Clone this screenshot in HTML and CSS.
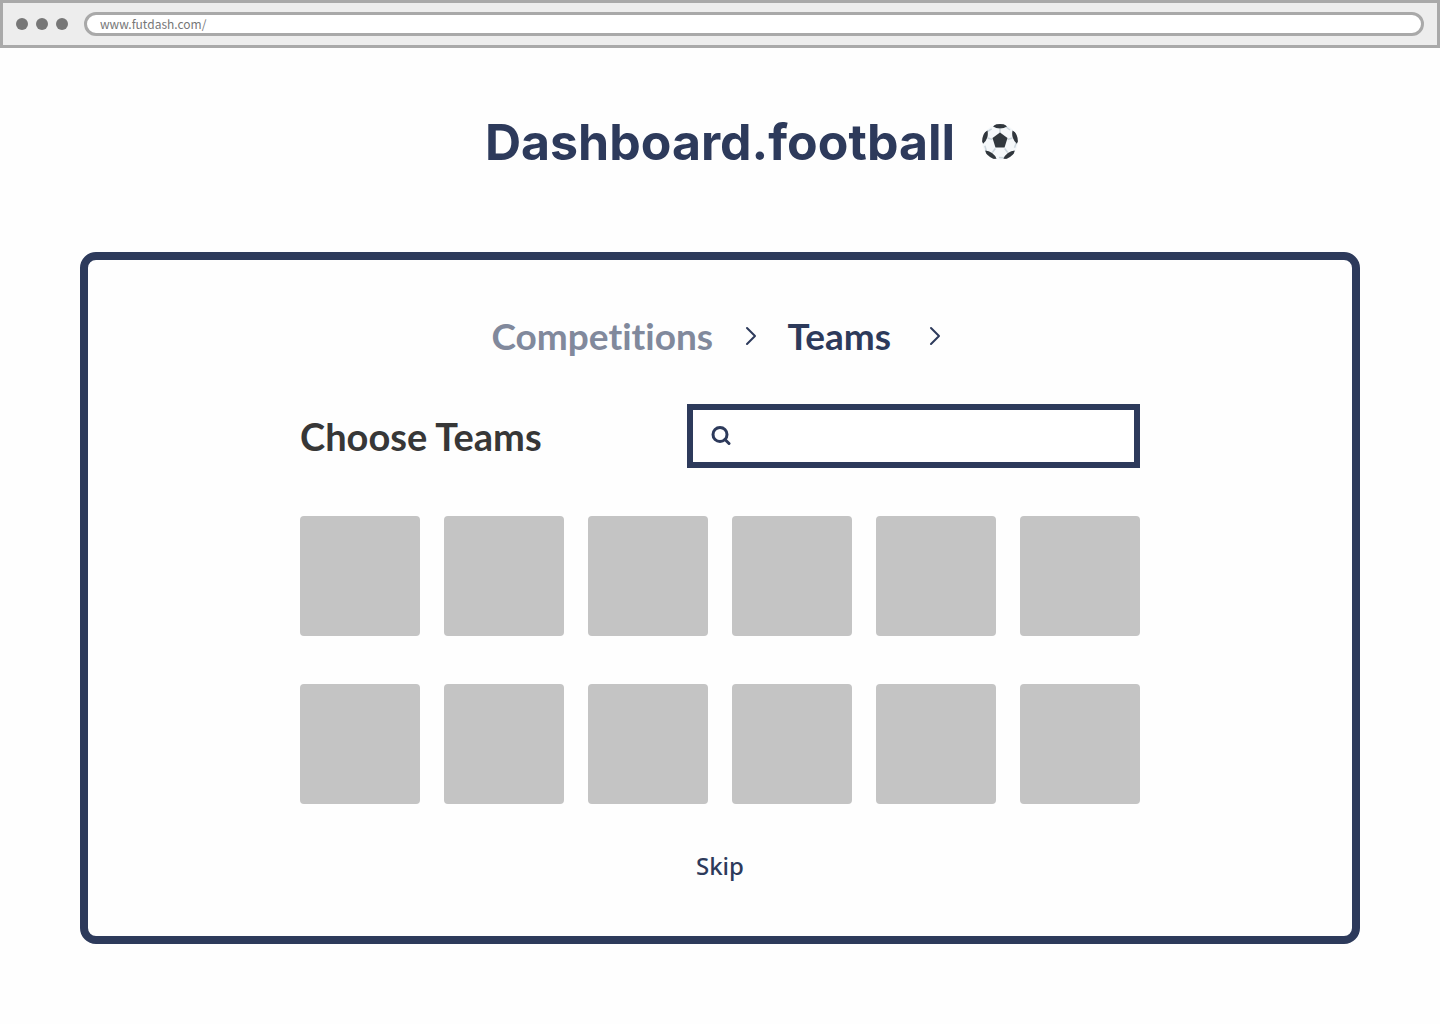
FILE: index.html
```html
<!DOCTYPE html>
<html lang="en">
<head>
<meta charset="utf-8">
<meta name="viewport" content="width=device-width, initial-scale=1">
<title>Dashboard.football</title>
<link rel="stylesheet" href="styles.css">
</head>
<body>
<div class="browser-bar">
  <div class="dots"><span class="dot"></span><span class="dot"></span><span class="dot"></span></div>
  <input class="address" type="text" aria-label="Address" value="www.futdash.com/">
</div>
<header class="site-header">
  <h1 class="site-title">Dashboard.football</h1>
  <svg class="ball" viewBox="0 0 36 36" aria-hidden="true">
    <defs>
      <clipPath id="ball-edge"><circle cx="18" cy="18" r="18"/></clipPath>
      <g id="ball-patch">
        <path d="M18 10V5M23.500 2.500L28 6" fill="none" stroke="#ccd6dd" stroke-width="1.500"/>
        <path d="M11 2.500L14 0V-2h8v2l3 2.500Q22 4.500 18 4.500T11 2.500z" fill="#31373d"/>
      </g>
    </defs>
    <g clip-path="url(#ball-edge)">
      <circle cx="18" cy="18" r="18" fill="#f5f8fa"/>
      <use href="#ball-patch"/>
      <use href="#ball-patch" transform="rotate(72 18 18)"/>
      <use href="#ball-patch" transform="rotate(144 18 18)"/>
      <use href="#ball-patch" transform="rotate(216 18 18)"/>
      <use href="#ball-patch" transform="rotate(288 18 18)"/>
      <path d="M18 8.500l7.500 5.500-3 9.500h-9l-3-9.500z" fill="#31373d"/>
    </g>
  </svg>
</header>
<main class="panel">
  <nav class="steps" aria-label="Setup steps">
    <a class="step step-done" href="#competitions">Competitions</a>
    <svg class="chevron" viewBox="0 0 12 20" aria-hidden="true"><path d="M2 2l8 8-8 8"/></svg>
    <a class="step" href="#teams" aria-current="step">Teams</a>
    <svg class="chevron" viewBox="0 0 12 20" aria-hidden="true"><path d="M2 2l8 8-8 8"/></svg>
  </nav>
  <div class="toolbar">
    <h2 class="heading">Choose Teams</h2>
    <label class="search">
      <svg class="search-icon" viewBox="0 0 20 20" aria-hidden="true"><circle cx="9" cy="8.500" r="7"/><path d="M14 13.500l4 4"/></svg>
      <input class="search-input" type="search" aria-label="Search teams">
    </label>
  </div>
  <div class="teams" id="teams">
    <button class="team" type="button" aria-label="Team 1"></button>
    <button class="team" type="button" aria-label="Team 2"></button>
    <button class="team" type="button" aria-label="Team 3"></button>
    <button class="team" type="button" aria-label="Team 4"></button>
    <button class="team" type="button" aria-label="Team 5"></button>
    <button class="team" type="button" aria-label="Team 6"></button>
    <button class="team" type="button" aria-label="Team 7"></button>
    <button class="team" type="button" aria-label="Team 8"></button>
    <button class="team" type="button" aria-label="Team 9"></button>
    <button class="team" type="button" aria-label="Team 10"></button>
    <button class="team" type="button" aria-label="Team 11"></button>
    <button class="team" type="button" aria-label="Team 12"></button>
  </div>
  <button class="skip" type="button">Skip</button>
</main>
</body>
</html>
```
FILE: styles.css
```css
* { box-sizing: border-box; }

body {
  margin: 0;
  background: #fefefe;
  color: #2d3a5b;
  font-family: "Open Sans", "Noto Sans", sans-serif;
}

.browser-bar {
  display: flex;
  align-items: center;
  gap: 16px;
  height: 48px;
  padding: 0 13px;
  border: 3px solid #a9a9a9;
  background: #ededed;
}

.dots { display: flex; gap: 8px; }

.dot {
  width: 12px;
  height: 12px;
  border-radius: 50%;
  background: #777;
}

.address {
  flex: 1;
  min-width: 0;
  height: 24px;
  padding: 0 13px 2px;
  border: 3px solid #a9a9a9;
  border-radius: 12px;
  background: #fff;
  color: #777;
  font-family: "Noto Sans CJK JP", sans-serif;
  font-size: 12px;
}

.site-header {
  display: grid;
  grid-template-columns: 1fr auto 1fr;
  align-items: center;
  column-gap: 27px;
  padding: 64px 80px 80px;
}

.site-title {
  grid-column: 2;
  margin: 0;
  font-family: Inter, sans-serif;
  font-size: 50px;
  font-weight: 700;
  line-height: 60px;
}

.ball { width: 36px; height: 36px; }

.panel {
  display: flex;
  flex-direction: column;
  align-items: center;
  margin: 0 80px 80px;
  padding: 52px 24px 56px;
  border: 8px solid #2d3a5b;
  border-radius: 16px;
}

.steps {
  display: grid;
  grid-template-columns: 222px 12px 110px 20px;
  align-items: center;
  gap: 31px;
  margin-bottom: 44px;
}

.step {
  color: #2d3a5b;
  font-family: Lato, sans-serif;
  font-size: 37px;
  font-weight: 700;
  font-variant-ligatures: none;
  line-height: 48px;
  text-decoration: none;
}

.step-done { color: #81899c; }

.chevron {
  width: 12px;
  height: 20px;
  fill: none;
  stroke: #2d3a5b;
  stroke-width: 2;
  stroke-linecap: round;
  stroke-linejoin: round;
}

.toolbar {
  display: flex;
  align-items: center;
  justify-content: space-between;
  gap: 24px;
  width: 100%;
  max-width: 840px;
  margin-bottom: 48px;
}

.heading {
  margin: 0;
  color: #373737;
  font-family: Lato, sans-serif;
  font-size: 38px;
  font-weight: 700;
  line-height: 48px;
}

.search {
  display: flex;
  align-items: center;
  gap: 12px;
  width: 54%;
  max-width: 453px;
  height: 64px;
  padding: 0 18px;
  border: 6px solid #2d3a5b;
  background: #fff;
}

.search-icon {
  flex: none;
  width: 20px;
  height: 20px;
  fill: none;
  stroke: #2d3a5b;
  stroke-width: 3;
  stroke-linecap: round;
}

.search-input {
  flex: 1;
  min-width: 0;
  padding: 0;
  border: 0;
  outline: 0;
  background: transparent;
  color: inherit;
  font: inherit;
  font-size: 24px;
}

.teams {
  display: grid;
  grid-template-columns: repeat(6, 1fr);
  gap: 48px 24px;
  width: 100%;
  max-width: 840px;
  margin-bottom: 48px;
}

.team {
  aspect-ratio: 1;
  padding: 0;
  border: 0;
  border-radius: 4px;
  background: #c4c4c4;
}

.skip {
  padding: 0;
  border: 0;
  background: none;
  color: #2d3a5b;
  font-family: "Noto Sans", sans-serif;
  font-size: 24px;
  font-weight: 500;
  line-height: 28px;
}
```
